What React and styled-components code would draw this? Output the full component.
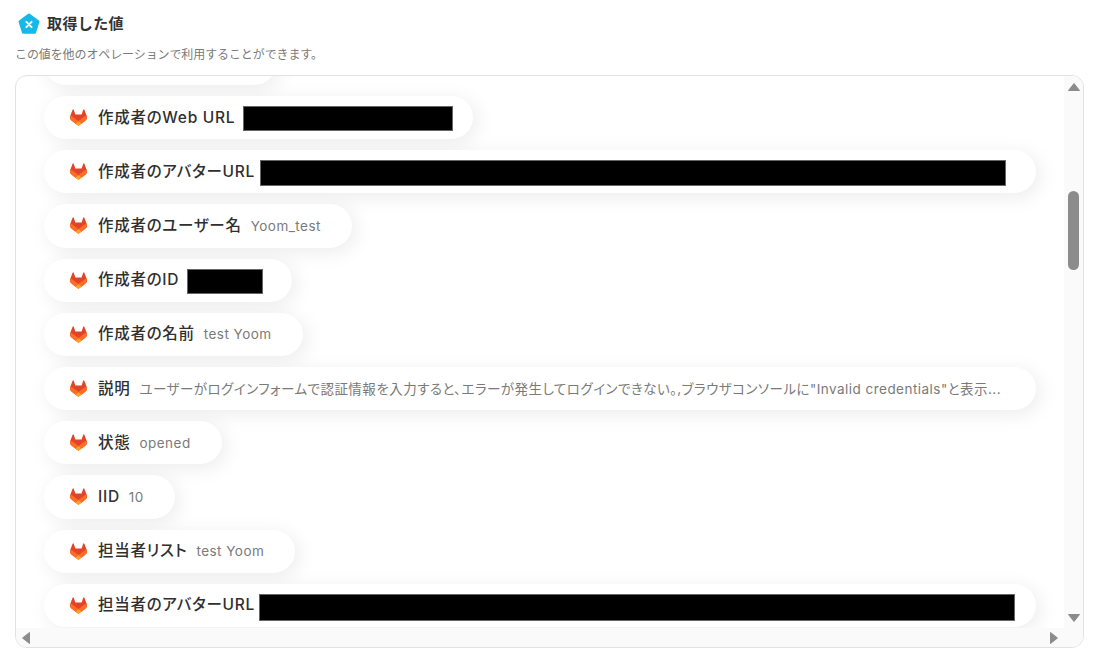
import React from "react";
import styled, { createGlobalStyle } from "styled-components";

const Global = createGlobalStyle`
  html, body { margin: 0; padding: 0; background: #fff; }
  body { font-family: Inter, "Noto Sans CJK JP", "Noto Sans", sans-serif; color: #2b2b2b; }
`;

const Page = styled.div`
  width: 1100px;
  height: 667px;
  box-sizing: border-box;
  padding: 13px 16px 19px 15px;
  display: flex;
  flex-direction: column;
  overflow: hidden;
`;
const Header = styled.div`
  display: flex;
  align-items: center;
  gap: 7px;
  height: 21px;
  padding-left: 3px;
`;
const Title = styled.h2`
  margin: 0;
  font-size: 15px;
  line-height: 21px;
  font-weight: 600;
  letter-spacing: 0.4px;
  color: #333;
`;
const Sub = styled.p`
  margin: 11px 0 0;
  height: 19px;
  font-size: 12px;
  line-height: 19px;
  color: #7a7a7a;
  letter-spacing: -0.1px;
  white-space: nowrap;
`;
const Panel = styled.section`
  margin-top: 11px;
  flex: 1;
  min-height: 0;
  border: 1px solid #e2e2e2;
  border-radius: 12px;
  display: grid;
  grid-template-columns: 1fr 19px;
  grid-template-rows: 1fr 19px;
  overflow: hidden;
`;
const Viewport = styled.div`
  overflow: hidden;
  min-width: 0;
  min-height: 0;
`;
const List = styled.div`
  display: flex;
  flex-direction: column;
  align-items: flex-start;
  gap: 11px;
  margin-top: -34.2px;
  padding-left: 28px;
`;
const Row = styled.div`
  flex: none;
  box-sizing: border-box;
  height: 43.2px;
  width: ${(p) => (p.$width ? `${p.$width}px` : "auto")};
  padding: 0 ${(p) => p.$end ?? 31}px 0 26px;
  display: flex;
  align-items: center;
  background: #fff;
  border-radius: 22px;
  box-shadow: 4px 4px 20px rgba(0, 0, 0, 0.08);
`;
const Icon = styled.svg`
  flex: none;
  width: 17px;
  height: 17px;
  margin-right: 11px;
`;
const Label = styled.span`
  flex: none;
  font-size: 15.5px;
  font-weight: 500;
  letter-spacing: 0.72px;
  line-height: 20px;
  color: #2f2f2f;
  white-space: nowrap;
  font-feature-settings: "palt";
`;
const Value = styled.span`
  margin-left: 9px;
  font-size: 13.5px;
  color: #7a7a7a;
  letter-spacing: 0.47px;
  line-height: 18px;
  white-space: nowrap;
  font-feature-settings: "palt";
`;
const Redacted = styled.span`
  flex: none;
  display: block;
  box-sizing: border-box;
  margin-left: ${(p) => p.$gap ?? 7}px;
  margin-top: ${(p) => p.$top ?? 0}px;
  width: ${(p) => p.$w}px;
  height: ${(p) => p.$h}px;
  background: #000;
  border: 1px solid #666;
`;
const VTrack = styled.div`
  background: #fafafa;
  display: flex;
  flex-direction: column;
  align-items: center;
  padding-top: 6px;
`;
const Thumb = styled.div`
  width: 11px;
  height: 79px;
  margin-top: 99px;
  border-radius: 6px;
  background: #8c8c8c;
`;
const Spacer = styled.div`
  flex: 1;
`;
const DownArrowSlot = styled.div`
  margin-bottom: 5px;
`;
const HTrack = styled.div`
  background: #fafafa;
  display: flex;
  align-items: center;
  justify-content: space-between;
  padding: 0 5px 0 5px;
`;
const Corner = styled.div`
  background: #fafafa;
`;
const Arrow = styled.svg`
  display: block;
  width: ${(p) => p.$w}px;
  height: ${(p) => p.$h}px;
  fill: #8c8c8c;
  stroke: #8c8c8c;
  stroke-width: 1;
  stroke-linejoin: round;
`;

const GitLab = () => (
  <Icon viewBox="0 0 25 24" aria-hidden="true">
    <path fill="#E24329" d="m24.507 9.5-.034-.09L21.082.562a.896.896 0 0 0-1.694.091l-2.29 7.01H7.825L5.535.653a.898.898 0 0 0-1.694-.09L.451 9.411.416 9.5a6.297 6.297 0 0 0 2.09 7.278l.012.01.03.022 5.16 3.867 2.56 1.935 1.554 1.176a1.051 1.051 0 0 0 1.268 0l1.555-1.176 2.56-1.935 5.197-3.89.014-.01A6.297 6.297 0 0 0 24.507 9.5Z" />
    <path fill="#FC6D26" d="m24.507 9.5-.034-.09a11.44 11.44 0 0 0-4.56 2.051l-7.447 5.632 4.742 3.584 5.197-3.89.014-.01A6.297 6.297 0 0 0 24.507 9.5Z" />
    <path fill="#FCA326" d="m7.707 20.677 2.56 1.935 1.555 1.176a1.051 1.051 0 0 0 1.268 0l1.555-1.176 2.56-1.935-4.743-3.584-4.755 3.584Z" />
    <path fill="#FC6D26" d="M5.01 11.461a11.43 11.43 0 0 0-4.56-2.05L.416 9.5a6.297 6.297 0 0 0 2.09 7.278l.012.01.03.022 5.16 3.867 4.745-3.584-7.444-5.632Z" />
  </Icon>
);

const Logo = () => (
  <svg width="22" height="22" viewBox="0 0 22 22" aria-hidden="true">
    <path d="M11 2 L20 8.6 L16.6 19.2 L5.4 19.2 L2 8.6 Z" fill="#14B9E8" stroke="#14B9E8" strokeWidth="3" strokeLinejoin="round" />
    <path d="M8.4 8.9 L13.6 14.1 M13.6 8.9 L8.4 14.1" stroke="#fff" strokeWidth="2" strokeLinecap="round" />
  </svg>
);

const rows = [
  { label: "作成者のWeb URL", redact: { w: 210, h: 25, gap: 7.5, top: 1 }, end: 20 },
  { label: "作成者のアバターURL", redact: { w: 746, h: 26, gap: 5.5, top: 2 }, width: 992 },
  { label: "作成者のユーザー名", value: "Yoom_test" },
  { label: "作成者のID", redact: { w: 76, h: 25, gap: 7.5, top: 3 }, end: 29 },
  { label: "作成者の名前", value: "test Yoom" },
  { label: "説明", value: "ユーザーがログインフォームで認証情報を入力すると、エラーが発生してログインできない。,ブラウザコンソールに\"Invalid credentials\"と表示...", width: 992 },
  { label: "状態", value: "opened" },
  { label: "IID", value: "10" },
  { label: "担当者リスト", value: "test Yoom" },
  { label: "担当者のアバターURL", redact: { w: 756, h: 27, gap: 4.5, top: 4 }, width: 992 },
];

export default function App() {
  return (
    <Page>
      <Global />
      <Header>
        <Logo />
        <Title>取得した値</Title>
      </Header>
      <Sub>この値を他のオペレーションで利用することができます。</Sub>
      <Panel>
        <Viewport>
          <List>
            <Row $width={232} />
            {rows.map((r) => (
              <Row key={r.label} $width={r.width} $end={r.end}>
                <GitLab />
                <Label>{r.label}</Label>
                {r.redact ? (
                  <Redacted $w={r.redact.w} $h={r.redact.h} $gap={r.redact.gap} $top={r.redact.top} />
                ) : (
                  <Value>{r.value}</Value>
                )}
              </Row>
            ))}
          </List>
        </Viewport>
        <VTrack>
          <Arrow $w={14} $h={10} viewBox="0 0 14 10"><path d="M7 1.5 L12.5 8.5 L1.5 8.5 Z" /></Arrow>
          <Thumb />
          <Spacer />
          <DownArrowSlot>
            <Arrow $w={14} $h={10} viewBox="0 0 14 10"><path d="M1.5 1.5 L12.5 1.5 L7 8.5 Z" /></Arrow>
          </DownArrowSlot>
        </VTrack>
        <HTrack>
          <Arrow $w={10} $h={14} viewBox="0 0 10 14"><path d="M8.5 1.5 L8.5 12.5 L1.5 7 Z" /></Arrow>
          <Arrow $w={10} $h={14} viewBox="0 0 10 14"><path d="M1.5 1.5 L8.5 7 L1.5 12.5 Z" /></Arrow>
        </HTrack>
        <Corner />
      </Panel>
    </Page>
  );
}
